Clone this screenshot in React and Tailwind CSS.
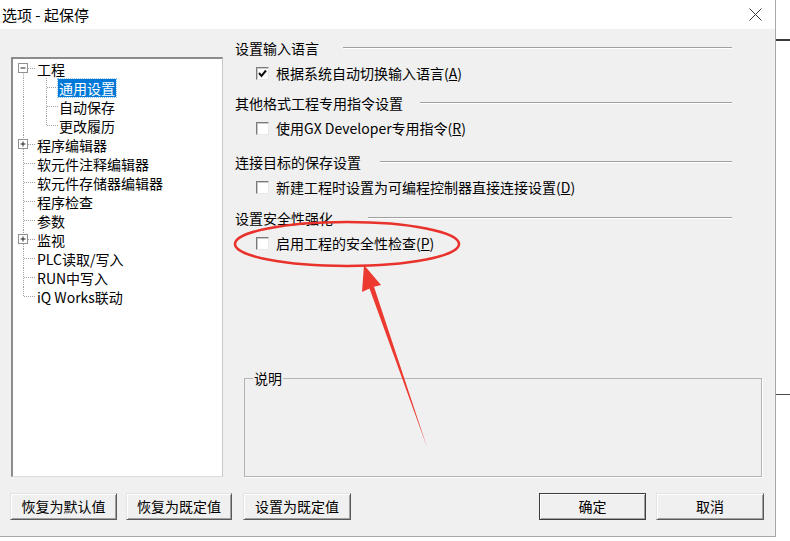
import React from 'react'

const treeRows = [
  { t: '工程', lvl: 0, exp: '-', first: true },
  { t: '通用设置', lvl: 1, sel: true },
  { t: '自动保存', lvl: 1 },
  { t: '更改履历', lvl: 1, lastChild: true },
  { t: '程序编辑器', lvl: 0, exp: '+' },
  { t: '软元件注释编辑器', lvl: 0 },
  { t: '软元件存储器编辑器', lvl: 0 },
  { t: '程序检查', lvl: 0 },
  { t: '参数', lvl: 0 },
  { t: '监视', lvl: 0, exp: '+' },
  { t: 'PLC读取/写入', lvl: 0 },
  { t: 'RUN中写入', lvl: 0 },
  { t: 'iQ Works联动', lvl: 0, last: true },
]

const dot = { stroke: '#a0a0a0', strokeWidth: 1, strokeDasharray: '1 1' }

// 树形连接线
const Connector = ({ row }) => {
  if (row.lvl === 1) {
    return (
      <svg width="45" height="19" className="shrink-0">
        <line x1="10.5" y1="0" x2="10.5" y2="19" {...dot} />
        <line x1="33.5" y1="0" x2="33.5" y2={row.lastChild ? 9.5 : 19} {...dot} />
        <line x1="34" y1="9.5" x2="45" y2="9.5" {...dot} />
      </svg>
    )
  }
  return (
    <svg width="23" height="19" className="shrink-0">
      <line x1="10.5" y1={row.first ? 9.5 : 0} x2="10.5" y2={row.last ? 9.5 : 19} {...dot} />
      <line x1="11" y1="9.5" x2="23" y2="9.5" {...dot} />
      {row.exp ? (
        <g>
          <rect x="5.5" y="4.5" width="9" height="9" fill="#fff" stroke="#919191" />
          <line x1="7.5" y1="9" x2="12.5" y2="9" stroke="#222" />
          {row.exp === '+' ? <line x1="10" y1="6.5" x2="10" y2="11.5" stroke="#222" /> : null}
        </g>
      ) : null}
    </svg>
  )
}

const Heading = ({ text, gap, className = '' }) => (
  <div className={`flex items-center h-[20px] w-[497px] ${className}`}>
    <span className="shrink-0 leading-[20px]">{text}</span>
    <div className="flex-1 flex flex-col" style={{ marginLeft: gap }}>
      <div className="h-px bg-[#a0a0a0]" />
      <div className="h-px bg-white" />
    </div>
  </div>
)

const Check = ({ checked, children, className = '' }) => (
  <div className={`flex items-center h-[20px] ml-[21px] ${className}`}>
    <div className="w-[13px] h-[13px] bg-white border border-t-[#7a7a7a] border-l-[#7a7a7a] border-r-[#e8e8e8] border-b-[#e8e8e8] shadow-[inset_1px_1px_0_#c8c8c8] flex items-center justify-center">
      {checked ? (
        <svg width="11" height="11">
          <polyline points="2,5 4.5,8 9,2.5" fill="none" stroke="#111" strokeWidth="2" />
        </svg>
      ) : null}
    </div>
    <span className="ml-[7px] leading-[20px]">{children}</span>
  </div>
)

const Btn = ({ children, w, def = false, className = '' }) => (
  <div
    className={`h-[27px] flex items-center justify-center bg-[#f0f0f0] border ${
      def ? 'border-[#3c3c3c]' : 'border-t-[#e3e3e3] border-l-[#e3e3e3] border-r-[#5a5a5a] border-b-[#5a5a5a]'
    } shadow-[inset_1px_1px_0_#fff,inset_-1px_-1px_0_#a0a0a0] ${className}`}
    style={{ width: w }}
  >
    {children}
  </div>
)

const U = ({ c }) => <span className="underline">{c}</span>

const App = () => {
  return (
    <div className="relative w-[790px] h-[541px] bg-white overflow-hidden flex font-['Noto_Sans_CJK_SC',sans-serif] text-[14px] text-black">
      {/* 对话框 */}
      <div className="w-[776px] h-[537px] shrink-0 flex flex-col border-r border-b border-[#a8a8a8]">
        {/* 标题栏 */}
        <div className="h-[29px] bg-white flex items-center pl-[2px] pr-[13px]">
          <span className="text-[15px] leading-[20px] flex-1">选项 - 起保停</span>
          <svg width="13" height="13">
            <line x1="0.5" y1="0.5" x2="12.5" y2="12.5" stroke="#333" />
            <line x1="12.5" y1="0.5" x2="0.5" y2="12.5" stroke="#333" />
          </svg>
        </div>

        {/* 内容 */}
        <div className="flex-1 bg-[#f0f0f0] flex flex-col pt-[9px]">
          <div className="flex h-[439px]">
            {/* 左侧树 */}
            <div className="w-[223px] pl-[11px] pt-[19px] shrink-0">
              <div className="w-[212px] h-[420px] bg-white border-t-2 border-l-2 border-r border-b border-t-[#8c8c8c] border-l-[#8c8c8c] border-r-[#c8c8c8] border-b-[#dcdcdc]">
                {treeRows.map((row) => (
                  <div key={row.t} className="flex items-center h-[19px]">
                    <Connector row={row} />
                    <span
                      className={`px-[1px] h-[18px] leading-[18px] whitespace-nowrap ${
                        row.sel ? 'bg-[#0078d7] text-white outline outline-1 outline-dotted outline-[#8fc4f0]' : ''
                      }`}
                    >
                      {row.t}
                    </span>
                  </div>
                ))}
              </div>
            </div>

            {/* 右侧设置 */}
            <div className="flex-1 pl-[12px] flex flex-col">
              <Heading text="设置输入语言" gap={24} />
              <Check checked className="mt-[5px]">
                根据系统自动切换输入语言(<U c="A" />)
              </Check>
              <Heading text="其他格式工程专用指令设置" gap={17} className="mt-[10px]" />
              <Check className="mt-[5px]">
                使用GX Developer专用指令(<U c="R" />)
              </Check>
              <Heading text="连接目标的保存设置" gap={19} className="mt-[14px]" />
              <Check className="mt-[5px]">
                新建工程时设置为可编程控制器直接连接设置(<U c="D" />)
              </Check>
              <Heading text="设置安全性强化" gap={35} className="mt-[11px]" />
              <Check className="mt-[5px]">
                启用工程的安全性检查(<U c="P" />)
              </Check>

              <fieldset className="mt-[115px] ml-[9px] w-[518px] h-[109px] border border-[#b4b4b4] shadow-[1px_1px_0_#fff] px-0">
                <legend className="ml-[8px] px-[1px] leading-[20px]">说明</legend>
              </fieldset>
            </div>
          </div>

          {/* 按钮 */}
          <div className="flex mt-[16px] pl-[10px]">
            <Btn w={107}>恢复为默认值</Btn>
            <Btn w={106} className="ml-[9px]">恢复为既定值</Btn>
            <Btn w={108} className="ml-[11px]">设置为既定值</Btn>
            <Btn w={107} def className="ml-[188px]">确定</Btn>
            <Btn w={108} className="ml-[10px]">取消</Btn>
          </div>
        </div>
      </div>

      {/* 右侧窗口残边 */}
      <div className="flex-1 flex flex-col">
        <div className="mt-[39px] h-[2px] bg-[#3a3a3a]" />
        <div className="mt-[353px] h-px bg-[#4a4a4a]" />
      </div>

      {/* 红色标注 */}
      <svg className="absolute inset-0 pointer-events-none" width="790" height="541">
        <ellipse cx="347" cy="244" rx="112" ry="22" fill="none" stroke="#e8322b" strokeWidth="2.5" />
        <polygon
          points="364,265 362,292 369.5,288.5 427,447 374,286.8 381,285"
          fill="#ec3a30"
        />
      </svg>
    </div>
  )
}

export default App
